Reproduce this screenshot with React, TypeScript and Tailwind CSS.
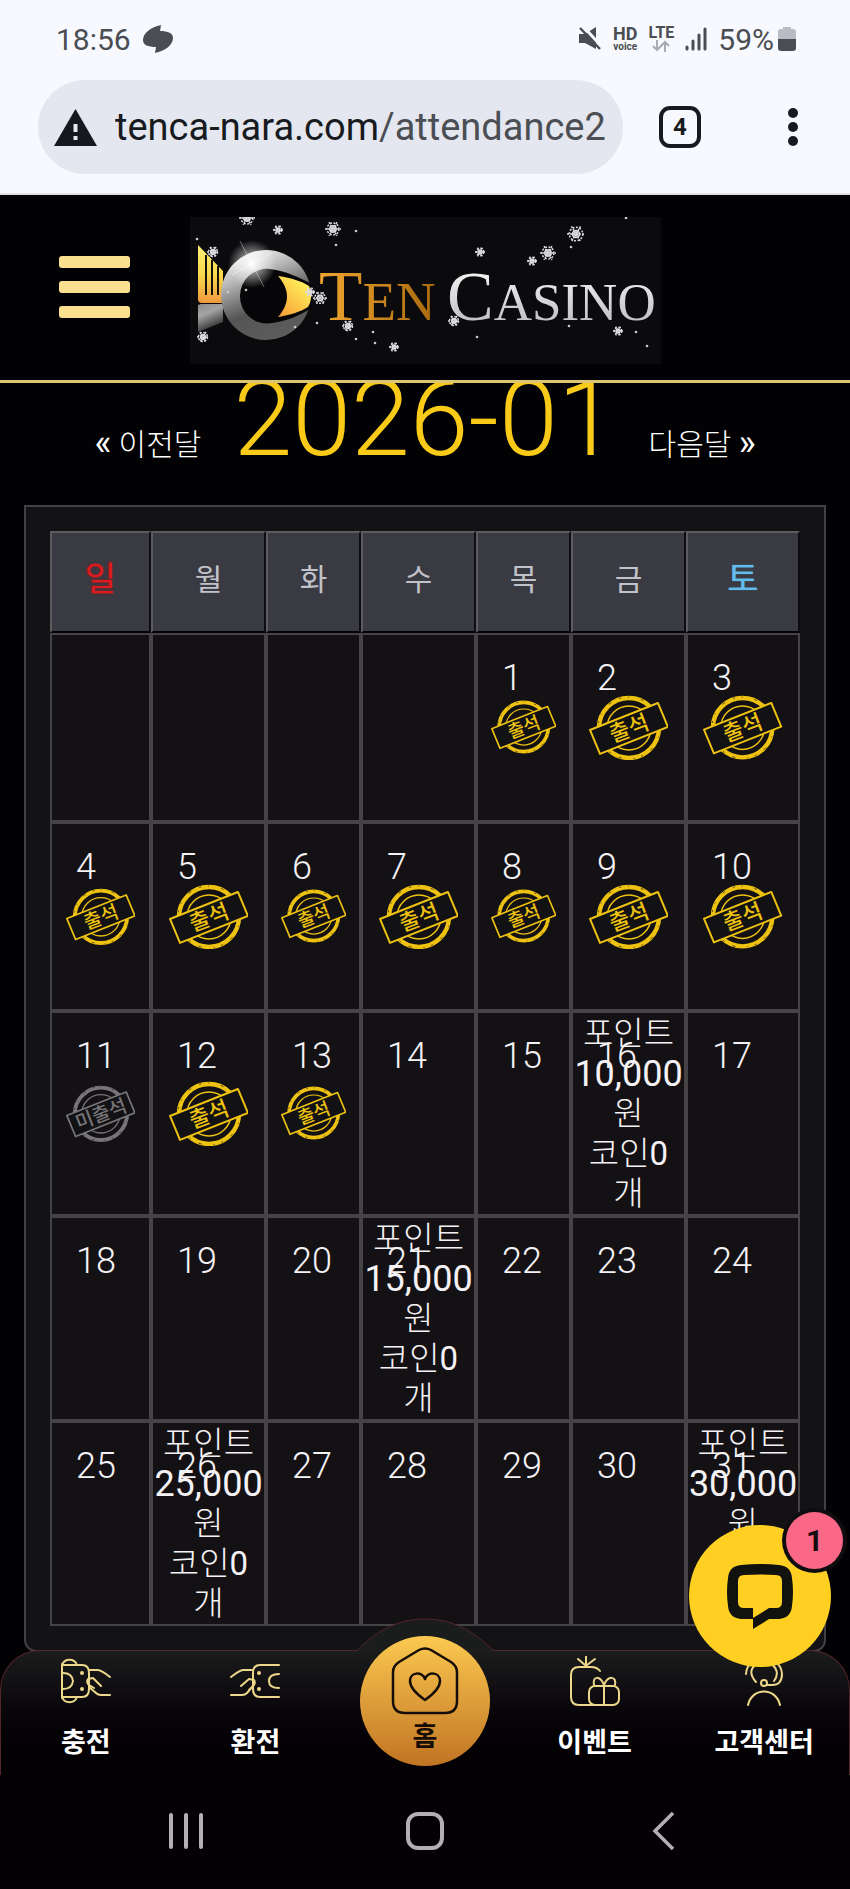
import type { ReactNode } from "react";

type DayCell = {
  day: number;
  status?: "attended" | "missed";
  reward?: string;
};

const weekdays = ["일", "월", "화", "수", "목", "금", "토"];

const rewards: Record<number, string> = {
  16: "10,000",
  21: "15,000",
  26: "25,000",
  31: "30,000",
};

const missedDays = [11];
const today = 13;
const firstWeekday = 4;

function buildWeeks() {
  const cells: (DayCell | null)[] = Array.from({ length: firstWeekday }, () => null);
  for (let day = 1; day <= 31; day++) {
    const attended = day <= today && !missedDays.includes(day);
    cells.push({
      day,
      status: attended ? "attended" : missedDays.includes(day) ? "missed" : undefined,
      reward: rewards[day],
    });
  }
  const weeks: (DayCell | null)[][] = [];
  for (let i = 0; i < cells.length; i += 7) {
    weeks.push(cells.slice(i, i + 7));
  }
  return weeks;
}

function StatusBar() {
  return (
    <div className="flex h-[78px] items-center justify-between pr-[54px] pl-14 text-[30px] text-[#4a4d51]">
      <div className="flex items-center gap-[11px]">
        <span>18:56</span>
        <svg viewBox="0 0 32 30" className="h-[30px] w-8" fill="currentColor" aria-hidden="true">
          <path d="M19 1C9 3 1 9 1 16c0 5 5 7 13 7l-1 6c10-2 18-8 18-15 0-5-5-7-13-7z" />
        </svg>
      </div>
      <div className="flex items-center gap-[11px]">
        <svg viewBox="0 0 24 26" className="h-[26px] w-6" aria-hidden="true">
          <path d="M1 8h6L18 1v22L7 17H1z" fill="currentColor" />
          <path d="M4 -1l20 22" stroke="#f7f9ff" strokeWidth="3" />
          <path d="M2 2l20 21" stroke="currentColor" strokeWidth="2.500" />
        </svg>
        <span className="flex flex-col items-center font-bold">
          <span className="text-lg leading-[16px]">HD</span>
          <span className="text-[10px] leading-[10px]">voice</span>
        </span>
        <span className="flex flex-col items-center font-bold">
          <span className="text-base leading-[14px]">LTE</span>
          <svg viewBox="0 0 20 12" className="h-3 w-5" fill="none" stroke="#a9acb1" strokeWidth="2" aria-hidden="true">
            <path d="M6 0v10M2 6l4 4 4-4M14 12V2M10 6l4-4 4 4" />
          </svg>
        </span>
        <svg viewBox="0 0 22 24" className="h-6 w-[22px]" stroke="currentColor" strokeWidth="3" strokeLinecap="round" aria-hidden="true">
          <path d="M2 20v2M8 14v8M14 8v14M20 2v20" />
        </svg>
        <span className="flex items-center gap-1">
          <span>59%</span>
          <svg viewBox="0 0 18 26" className="h-[26px] w-[18px]" aria-hidden="true">
            <path d="M5 1h8v2h2q3 0 3 3v8H0V6q0-3 3-3h2z" fill="#b9bcc4" />
            <path d="M0 13h18v9q0 3-3 3H3q-3 0-3-3z" fill="currentColor" />
          </svg>
        </span>
      </div>
    </div>
  );
}

function AddressBar() {
  return (
    <div className="flex items-center pt-0.5 pr-[52px] pb-[19px] pl-[38px]">
      <button
        type="button"
        className="flex h-[94px] min-w-0 flex-1 items-center gap-[18px] rounded-full bg-[#e4e7ef] pr-[18px] pl-4 text-left text-[38px]"
      >
        <svg viewBox="0 0 43 37" className="h-[37px] w-[43px] shrink-0" aria-hidden="true">
          <path d="M21.500 0L43 37H0z" fill="#15191f" />
          <path d="M19.500 15h4v8h-4zM19.500 27h4v4h-4z" fill="#e4e7ef" />
        </svg>
        <span className="min-w-0 flex-1 overflow-hidden whitespace-nowrap text-[#4b4f54]">
          <span className="text-[#171b20]">tenca-nara.com</span>/attendance2
        </span>
      </button>
      <button
        type="button"
        aria-label="열린 탭"
        className="ml-9 flex size-[42px] items-center justify-center rounded-[11px] border-4 border-[#171b20] text-2xl font-bold text-[#171b20]"
      >
        4
      </button>
      <button type="button" aria-label="메뉴" className="ml-[87px]">
        <svg viewBox="0 0 10 40" className="h-10 w-[10px]" fill="#171b20">
          <circle cx="5" cy="6" r="5" />
          <circle cx="5" cy="20" r="5" />
          <circle cx="5" cy="34" r="5" />
        </svg>
      </button>
    </div>
  );
}

const flakes = [
  [57, 1, 8], [88, 13, 5], [143, 12, 8], [23, 35, 6], [130, 81, 7], [120, 75, 5],
  [158, 109, 6], [204, 130, 5], [13, 120, 6], [290, 35, 5], [342, 44, 5], [358, 36, 8],
  [386, 17, 9], [264, 104, 6], [428, 114, 5],
];

const dots = [
  [7, 22], [146, 28], [166, 14], [105, 110], [127, 106], [166, 122], [185, 126], [183, 115],
  [287, 120], [379, 109], [446, 115], [457, 129], [381, 30], [38, 75], [56, 73], [436, 1],
];

function Logo() {
  return (
    <svg viewBox="0 0 471 147" className="w-full max-w-[471px] bg-[#0b0a0d]" role="img" aria-label="Ten Casino">
      <defs>
        <linearGradient id="goldComb" x1="0" y1="0" x2="0" y2="1">
          <stop offset="0" stopColor="#fff27a" />
          <stop offset="0.5" stopColor="#fbd94b" />
          <stop offset="1" stopColor="#ef9a3c" />
        </linearGradient>
        <linearGradient id="ring" x1="0.2" y1="0" x2="0.6" y2="1">
          <stop offset="0" stopColor="#fff" />
          <stop offset="0.3" stopColor="#b4b4b4" />
          <stop offset="0.5" stopColor="#7b7b7b" />
          <stop offset="0.65" stopColor="#555" />
          <stop offset="1" stopColor="#5e5c5c" />
        </linearGradient>
        <linearGradient id="base" x1="0" y1="0" x2="0.4" y2="1">
          <stop offset="0" stopColor="#8a8a8a" />
          <stop offset="0.4" stopColor="#a5a5a5" />
          <stop offset="1" stopColor="#2a2a2a" />
        </linearGradient>
        <linearGradient id="eye" x1="0" y1="1" x2="0.7" y2="0">
          <stop offset="0" stopColor="#f39a35" />
          <stop offset="0.5" stopColor="#fcc84a" />
          <stop offset="1" stopColor="#fff45c" />
        </linearGradient>
        <linearGradient id="tenText" x1="0" y1="0" x2="1" y2="0">
          <stop offset="0" stopColor="#f0a62f" />
          <stop offset="1" stopColor="#a8690f" />
        </linearGradient>
        <linearGradient id="casinoText" x1="0" y1="0" x2="0" y2="1">
          <stop offset="0" stopColor="#fff" />
          <stop offset="1" stopColor="#b5b5ba" />
        </linearGradient>
        <radialGradient id="flare">
          <stop offset="0" stopColor="#fff" />
          <stop offset="0.3" stopColor="#fff" stopOpacity="0.6" />
          <stop offset="1" stopColor="#fff" stopOpacity="0" />
        </radialGradient>
      </defs>
      <path d="M8 28L33 54V86H12q-4 0-4-4z" fill="url(#goldComb)" />
      <path d="M16 38v40M22 43v35M28 49v29" stroke="#15120b" strokeWidth="2" />
      <path d="M8 88l3-1h22v18L8 115z" fill="url(#base)" />
      <circle cx="76" cy="78" r="45" fill="url(#ring)" />
      <path d="M50 79a27 27 0 0 1 30-27c16 2 28 8 42 15v24c-12 7-24 13-40 15a27 27 0 0 1-32-27z" fill="#060608" />
      <path d="M88 59c14 2 23 5 31 10 3 6 3 15-1 21-8 5-18 8-30 10 12-14 12-27 0-41z" fill="url(#eye)" />
      <circle cx="62" cy="47" r="24" fill="url(#flare)" />
      <path d="M50 24l24 46M42 58l40-22" stroke="#fff" strokeOpacity="0.4" />
      <text x="129" y="103" fontFamily="'Liberation Serif', serif" fontSize="71" fill="url(#tenText)">
        T<tspan fontSize="55">EN</tspan>
      </text>
      <text x="257" y="103" fontFamily="'Liberation Serif', serif" fontSize="70" fill="url(#casinoText)">
        C<tspan fontSize="53">ASINO</tspan>
      </text>
      {flakes.map(([x, y, r]) => (
        <g key={`${x}-${y}`} stroke="#dcdcdf" fill="none" strokeWidth="1.500">
          <circle cx={x} cy={y} r={r * 0.4} fill="#dcdcdf" fillOpacity="0.7" />
          <circle cx={x} cy={y} r={r * 0.75} strokeDasharray="2 1.500" />
          <path d={`M${x - r} ${y}h${r * 2}M${x - r / 2} ${y - r * 0.85}l${r} ${r * 1.7}M${x + r / 2} ${y - r * 0.85}l${-r} ${r * 1.7}`} strokeDasharray="2 1" />
        </g>
      ))}
      {dots.map(([x, y]) => (
        <circle key={`${x}-${y}`} cx={x} cy={y} r="1.300" fill="#c9c9cc" />
      ))}
    </svg>
  );
}

function SiteHeader() {
  return (
    <header className="relative z-10 grid grid-cols-[1fr_auto_1fr] items-center border-b-[3px] border-[#dcc573] bg-[#020104] pt-[22px] pb-4">
      <button type="button" aria-label="전체 메뉴" className="mb-2 ml-[59px] flex w-[71px] flex-col gap-[13px]">
        <span className="h-3 rounded-[3px] bg-[#fbe090]" />
        <span className="h-3 rounded-[3px] bg-[#fbe090]" />
        <span className="h-3 rounded-[3px] bg-[#fbe090]" />
      </button>
      <a href="#" className="block w-[471px]">
        <Logo />
      </a>
    </header>
  );
}

function Stamp({ missed = false }: { missed?: boolean }) {
  const color = missed ? "#777579" : "#edc211";
  const label = missed ? "미출석" : "출석";
  return (
    <svg viewBox="0 0 80 66" className="mx-auto block w-[72%]" role="img" aria-label={label}>
      <circle cx="40" cy="33" r="30" fill="none" stroke={color} strokeWidth="4.500" />
      <circle cx="40" cy="33" r="31" fill="none" stroke="#151113" strokeDasharray="2 7 1 12 3 9" strokeOpacity="0.7" />
      <circle cx="40" cy="33" r="22" fill="none" stroke={color} strokeWidth="1.500" />
      <path d="M1 35L69 8l10 24-68 27z" fill="#121113" stroke={color} strokeWidth="2" strokeLinejoin="round" />
      <text
        x="40"
        y="41"
        transform="rotate(-21 40 33)"
        textAnchor="middle"
        fontFamily="'Noto Sans CJK KR', sans-serif"
        fontSize="22"
        fontWeight="500"
        fill={color}
      >
        {label}
      </text>
    </svg>
  );
}

function weekdayClass(index: number) {
  if (index === 0) return "text-[34px] font-normal text-[#dd1a1d] [text-shadow:0_0_2px_#b01012]";
  if (index === 6) return "text-[34px] font-normal text-[#62bdee] [text-shadow:0_0_1px_#62bdee]";
  return "text-[30px] font-normal text-[#c2c2ca]";
}

function Calendar() {
  return (
    <div className="mx-6 rounded-b-xl border-2 border-[#434145] bg-[#131215] p-6">
      <table className="w-full table-fixed border-separate border-spacing-0">
        <colgroup>
          <col className="w-[101px]" />
          <col className="w-[115px]" />
          <col className="w-[95px]" />
          <col className="w-[115px]" />
          <col className="w-[95px]" />
          <col className="w-[115px]" />
          <col className="w-[114px]" />
        </colgroup>
        <thead>
          <tr className="h-[102px]">
            {weekdays.map((name, index) => (
              <th
                key={name}
                scope="col"
                className="border-2 border-t-[#5b5b60] border-r-[#0d0c10] border-b-[#020103] border-l-[#5b5b60] bg-[#3a3a42] p-0 pb-1.5"
              >
                <span className={weekdayClass(index)}>{name}</span>
              </th>
            ))}
          </tr>
        </thead>
        <tbody>
          {buildWeeks().map((week, row) => (
            <tr key={row} className={row < 2 ? "h-[189px]" : "h-[205px]"}>
              {week.map((cell, index) => (
                <td
                  key={index}
                  className="relative border-2 border-[#464347] bg-[#141114] p-0 text-center align-middle text-[#f5f2f5]"
                >
                  {cell && (
                    <span className="absolute top-[23px] left-6 text-4xl leading-[40px] font-light">{cell.day}</span>
                  )}
                  {cell?.status && <Stamp missed={cell.status === "missed"} />}
                  {cell?.reward && (
                    <div className="text-[33px] leading-[40px] font-light">
                      <div>포인트</div>
                      <div className="text-4xl leading-[40px] font-normal">{cell.reward}</div>
                      <div>원</div>
                      <div>
                        코인<span className="font-normal">0</span>
                      </div>
                      <div>개</div>
                    </div>
                  )}
                </td>
              ))}
            </tr>
          ))}
        </tbody>
      </table>
    </div>
  );
}

function LineIcon({ children }: { children: ReactNode }) {
  return (
    <svg
      viewBox="0 0 50 50"
      className="size-[50px]"
      fill="none"
      stroke="#ecd78b"
      strokeWidth="2"
      strokeLinecap="round"
      strokeLinejoin="round"
      aria-hidden="true"
    >
      {children}
    </svg>
  );
}

function NavItem({ label, icon }: { label: string; icon: ReactNode }) {
  return (
    <a href="#" className="flex flex-col items-center gap-[17px] pt-[5px] text-white">
      <LineIcon>{icon}</LineIcon>
      <span className="text-[27px] leading-[40px] font-bold whitespace-nowrap">{label}</span>
    </a>
  );
}

function BottomNav() {
  return (
    <nav className="relative grid h-[125px] grid-cols-5 rounded-t-[40px] border border-b-0 border-[#54252a] bg-linear-to-b from-[#1b1c1c] to-[#030104] to-75%">
      <svg viewBox="0 0 138 34" className="absolute -top-[33px] left-1/2 h-[34px] w-[138px] -translate-x-1/2" aria-hidden="true">
        <path d="M0 34C18 16 38 1 69 1s51 15 69 33z" fill="#1b1c1c" />
        <path d="M0 33C18 16 38 1 69 1s51 15 69 32" fill="none" stroke="#54252a" />
      </svg>
      <NavItem
        label="충전"
        icon={
          <>
            <path d="M1 9a8 8 0 0 1 15 0M1 41a8 8 0 0 0 15 0M1 8v34" />
            <path d="M1 9h20q7 0 7 8v16q0 8-7 8H1" />
            <path d="M2 17q9 0 10 8-1 8-10 8" />
            <circle cx="21" cy="17" r="1" />
            <circle cx="21" cy="33" r="1" />
            <path d="M28 14h9q3 0 12 7M28 31l7 6q2 2 5 2h9M40 30l-8-8-5 1q-2 3 1 6l5 3" />
          </>
        }
      />
      <NavItem
        label="환전"
        icon={
          <>
            <path d="M49 9H30q-7 0-7 8v16q0 8 7 8h19" />
            <path d="M49 18q-10 0-10 7t10 7" />
            <circle cx="29" cy="17" r="1" />
            <circle cx="29" cy="33" r="1" />
            <path d="M22 14h-9q-3 0-12 7M22 31l-5 6q-2 2-5 2H1M11 30l8-7 5 1q2 3-1 6l-4 4" />
          </>
        }
      />
      <a
        href="#"
        className="relative -mt-[15px] flex size-[130px] flex-col items-center gap-0.5 justify-self-center rounded-full bg-linear-to-b from-[#fbc950] to-[#c07423] pt-[11px] text-[#160d06]"
      >
        <svg viewBox="0 0 68 68" className="size-[68px]" fill="none" stroke="currentColor" strokeWidth="2.500" strokeLinejoin="round" aria-hidden="true">
          <path d="M28 3q6-3 12 0l20 12q6 4 6 10v29q0 12-12 12H14Q2 66 2 54V25q0-6 6-10z" />
          <path d="M34 53C24 46 19 40 19 34c0-9 12-10 15-2 3-8 15-7 15 2 0 6-5 12-15 19z" />
        </svg>
        <span className="text-[27px] leading-[40px] font-bold">홈</span>
      </a>
      <NavItem
        label="이벤트"
        icon={
          <>
            <path d="M30 15q-3-4-9-4H9q-8 0-8 8v22q0 8 8 8h17M16 10V0M15 9L8 3M17 9l8-6" />
            <rect x="19" y="30" width="30" height="19" rx="6" />
            <path d="M34 29v20M34 29c-4-10-12-9-10 0M34 29c4-10 13-9 11 0" />
          </>
        }
      />
      <NavItem
        label="고객센터"
        icon={
          <>
            <path d="M7 18C8-3 42-3 43 18q0 11-10 11h-5" />
            <path d="M17 26c-9-10-4-19 8-19s16 10 10 18" />
            <circle cx="25" cy="27" r="3" />
            <path d="M9 49c4-18 28-18 32 0" />
          </>
        }
      />
    </nav>
  );
}

function ChatButton() {
  return (
    <button
      type="button"
      aria-label="채팅 상담"
      className="absolute -top-[125px] right-[19px] z-20 flex size-[142px] items-center justify-center rounded-full bg-[#ffd021]"
    >
      <svg viewBox="0 0 66 65" className="h-[65px] w-[66px]" fill="#11120e" aria-hidden="true">
        <path
          fillRule="evenodd"
          d="M14 1Q33-1 52 1q12 1 13 13 2 14 0 28-1 12-13 13H42L26 65V55H14Q2 54 1 42-1 28 1 14 2 2 14 1zM17 11q16-1 32 0 6 0 6 6v21q0 6-6 6h-7L26 54V44h-9q-6 0-6-6V17q0-6 6-6z"
        />
      </svg>
      <span className="absolute -top-[13px] -right-3 flex size-[57px] items-center justify-center rounded-full bg-[#fb6787] text-3xl font-bold text-[#160c10] ring-4 ring-[#100d10]">
        1
      </span>
    </button>
  );
}

function SystemNav() {
  return (
    <div className="flex h-[114px] items-center justify-between bg-[#030104] px-[168px] pb-0.5 text-[#b3b0b5]">
      <button type="button" aria-label="최근 앱">
        <svg viewBox="0 0 36 38" className="h-[38px] w-9" stroke="currentColor" strokeWidth="4" strokeLinecap="round">
          <path d="M3 3v32M18 3v32M33 3v32" />
        </svg>
      </button>
      <button type="button" aria-label="홈 화면">
        <svg viewBox="0 0 38 38" className="size-[38px]" fill="none" stroke="currentColor" strokeWidth="4">
          <rect x="2" y="2" width="34" height="34" rx="10" />
        </svg>
      </button>
      <button type="button" aria-label="뒤로">
        <svg viewBox="0 0 36 38" className="h-[38px] w-9" fill="none" stroke="currentColor" strokeWidth="3.500">
          <path d="M27 1L9 19l18 18" />
        </svg>
      </button>
    </div>
  );
}

export default function App() {
  return (
    <div className="min-h-screen bg-[#020103] font-['Roboto','Noto_Sans_CJK_KR',sans-serif]">
      <div className="border-b-2 border-[#dfe1e6] bg-[#f7f9ff]">
        <StatusBar />
        <AddressBar />
      </div>
      <SiteHeader />
      <main>
        <div className="flex items-baseline justify-center gap-8 pb-10 font-light">
          <a href="#" className="text-[30px] leading-[40px] whitespace-nowrap text-white">
            <span className="text-4xl leading-[40px] font-normal">«</span> 이전달
          </a>
          <h1 className="text-[106px] leading-[73px] whitespace-nowrap text-[#f9cb18]">2026-01</h1>
          <a href="#" className="text-[30px] leading-[40px] whitespace-nowrap text-white">
            다음달 <span className="text-4xl leading-[40px] font-normal">»</span>
          </a>
        </div>
        <Calendar />
      </main>
      <footer className="relative -mt-[2px]">
        <BottomNav />
        <ChatButton />
        <SystemNav />
      </footer>
    </div>
  );
}
